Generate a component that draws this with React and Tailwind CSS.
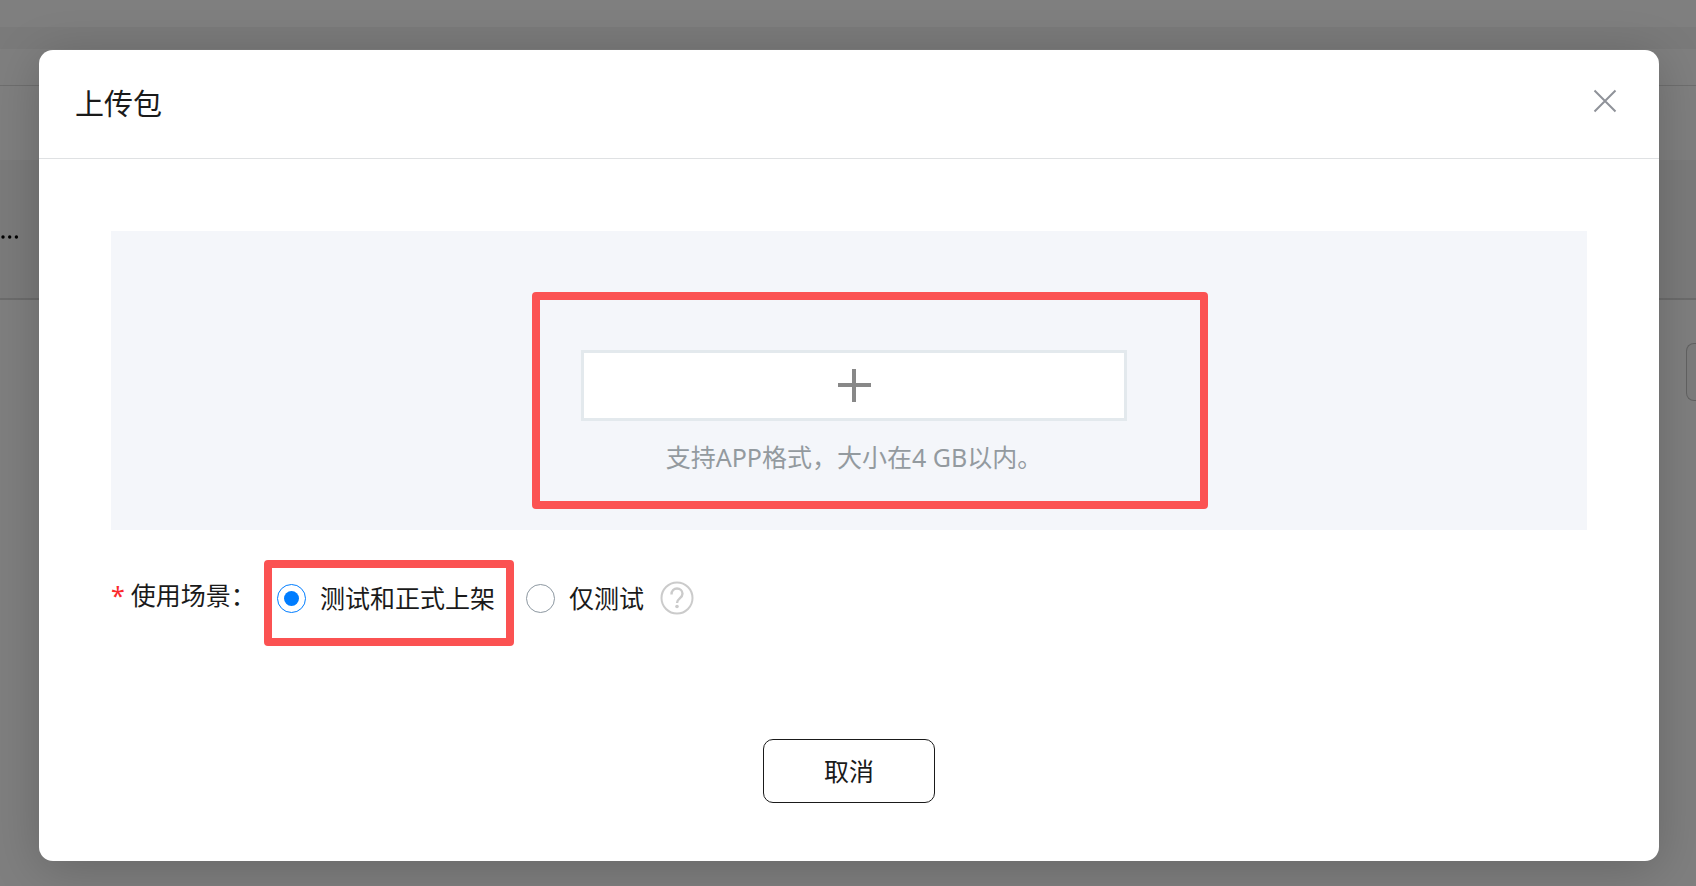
import { useState } from 'react'

const scenes = [
  { value: 'all', label: '测试和正式上架', marked: true },
  { value: 'test', label: '仅测试', help: true },
]

export default function App() {
  return (
    <div className="relative min-h-screen overflow-hidden bg-white font-['Noto_Sans','Noto_Sans_CJK_SC',sans-serif] text-[25px] leading-9 text-[#1a1a1a]">
      <PageBehind />

      {/* Overlay */}
      <div className="absolute inset-0 flex flex-col bg-black/50 pt-[50px] pr-[37px] pb-[25px] pl-[39px]">
        <UploadDialog />
      </div>
    </div>
  )
}

function PageBehind() {
  return (
    <div aria-hidden="true" className="text-black">
      <div className="h-[27px]" />
      <div className="h-[22px] bg-[#f4f4f4]" />
      <div className="h-[37px] border-b border-[#dcdcdc]" />
      <div className="h-[74px]" />
      <div className="flex h-[140px] items-center border-b-2 border-[#d8d8d8] bg-[#f6f6f6] pt-4">
        <Dots />
      </div>
      <div className="flex justify-end pt-[43px]">
        <div className="h-[58px] w-2.5 rounded-l-lg border border-r-0 border-[#c4c4c4] bg-[#f8f8f8]" />
      </div>
    </div>
  )
}

function Dots() {
  return (
    <svg width="20" height="4" viewBox="0 0 20 4" fill="currentColor">
      <circle cx="3" cy="2" r="1.7" />
      <circle cx="9.7" cy="2" r="1.7" />
      <circle cx="16.4" cy="2" r="1.7" />
    </svg>
  )
}

function UploadDialog() {
  const [scene, setScene] = useState('all')

  return (
    <section
      role="dialog"
      aria-labelledby="dialog-title"
      className="flex grow flex-col rounded-[14px] bg-white shadow-[0_8px_50px_rgba(0,0,0,0.2)]"
    >
      <header className="flex h-[109px] items-center justify-between border-b border-[#dfe1e3] pr-[42px] pl-9">
        <h2 id="dialog-title" className="text-[29px] leading-10">上传包</h2>
        <button type="button" aria-label="关闭" className="pb-1.5 text-[#8f9299]">
          <svg width="24" height="24" viewBox="0 0 24 24" fill="none" stroke="currentColor" strokeWidth="2">
            <path d="M1.5 1.5l21 21M22.5 1.5l-21 21" />
          </svg>
        </button>
      </header>

      <div className="px-[72px] pt-[72px]">
        <UploadArea />

        {/* Scene picker */}
        <div className="mt-[47px] flex items-center">
          <span id="scene-label" className="flex w-[166px] gap-1.5 pb-1.5">
            <span className="text-[#fa2a2d]">*</span>
            使用场景：
          </span>
          <div role="radiogroup" aria-labelledby="scene-label" className="flex items-center gap-[31px]">
            {scenes.map((item) => (
              <div key={item.value} className="relative flex items-center gap-4">
                <label className="flex items-center gap-3.5">
                  <input
                    type="radio"
                    name="scene"
                    value={item.value}
                    checked={scene === item.value}
                    onChange={() => setScene(item.value)}
                    className="grid size-[29px] appearance-none place-items-center rounded-full border border-[#8d98a1] before:size-[15px] before:rounded-full checked:border-[#007dff] checked:before:bg-[#007dff]"
                  />
                  {item.label}
                </label>
                {item.help && <HelpIcon />}
                {item.marked && <Marker className="-top-5 -right-[19px] -bottom-[30px] -left-[13px]" />}
              </div>
            ))}
          </div>
        </div>
      </div>

      <footer className="mt-auto flex justify-center pb-[58px]">
        <button type="button" className="h-16 w-[172px] rounded-[10px] border border-[#1a1a1a]">
          取消
        </button>
      </footer>
    </section>
  )
}

function UploadArea() {
  return (
    <div className="flex h-[299px] justify-center bg-[#f4f6fa] pt-[119px] pl-2.5">
      <div className="relative w-[546px]">
        <button
          type="button"
          aria-label="选择文件"
          className="flex h-[71px] w-full items-center justify-center border-3 border-[#e3e9ed] bg-white text-[#888]"
        >
          <svg width="34" height="33" viewBox="0 0 34 33" fill="none" stroke="currentColor" strokeWidth="4">
            <path d="M17 0v33M1 16h33" />
          </svg>
        </button>
        <p className="mt-[18px] text-center text-[#939a9f]">支持APP格式，大小在4 GB以内。</p>
        <Marker className="-top-[58px] -right-[81px] bottom-[21px] -left-[49px]" />
      </div>
    </div>
  )
}

// Red frame that points out the step to take
function Marker({ className }) {
  return <div className={`pointer-events-none absolute rounded border-8 border-[#fb5252] ${className}`} />
}

function HelpIcon() {
  return (
    <button type="button" aria-label="帮助" className="text-[#cbcbcb]">
      <svg width="34" height="34" viewBox="0 0 34 34" fill="none" stroke="currentColor" strokeWidth="2">
        <circle cx="17" cy="17" r="15.5" />
        <path d="M11.5 13.5c0-3.6 2.4-6 5.5-6s5.5 2.3 5.5 5.3c0 4.700-5.500 4.500-5.500 9.200" strokeWidth="2.400" />
        <circle cx="17" cy="25.500" r="1.800" fill="currentColor" stroke="none" />
      </svg>
    </button>
  )
}
